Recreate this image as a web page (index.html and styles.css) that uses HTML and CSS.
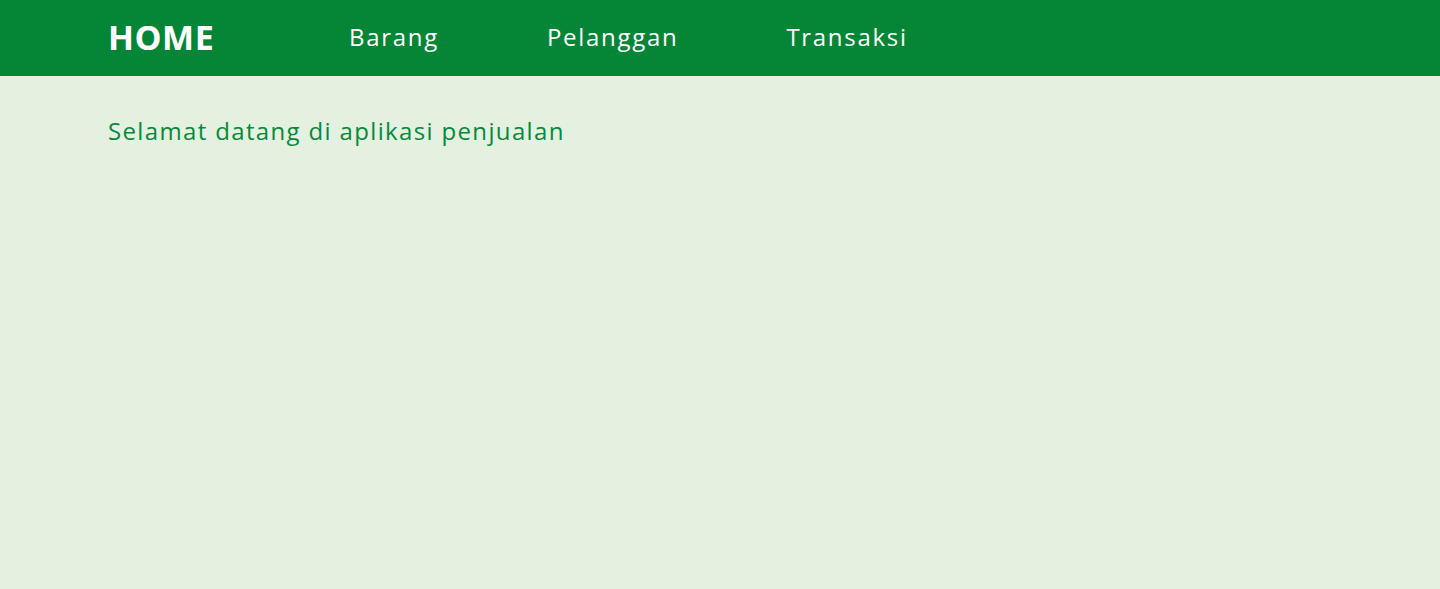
FILE: index.html
```html
<!DOCTYPE html>
<html lang="id">
<head>
<meta charset="utf-8">
<title>Home</title>
<link rel="stylesheet" href="styles.css">
</head>
<body>
<header class="topbar">
  <a class="brand" href="#">HOME</a>
  <nav class="nav">
    <a class="nav-link" href="#">Barang</a>
    <a class="nav-link" href="#">Pelanggan</a>
    <a class="nav-link" href="#">Transaksi</a>
  </nav>
</header>
<main class="content">
  <p class="welcome">Selamat datang di aplikasi penjualan</p>
</main>
</body>
</html>
```
FILE: styles.css
```css
* { box-sizing: border-box; }
html, body { margin: 0; padding: 0; height: 100%; }
body {
  background: #e4f0e0;
  font-family: "Open Sans", "Noto Sans", sans-serif;
}
.topbar {
  height: 76px;
  background: #058637;
  display: flex;
  align-items: center;
  padding-left: 108px;
}
.brand {
  color: #fff;
  text-decoration: none;
  font-weight: 700;
  font-size: 34px;
  letter-spacing: 0.5px;
  width: 241px;
  margin-top: -2px;
}
.nav { display: flex; gap: 108px; }
.nav-link {
  color: #fff;
  text-decoration: none;
  font-size: 24px;
  font-weight: 500;
  letter-spacing: 1.7px;
  margin-top: -3px;
}
.content { padding: 0 108px; }
.welcome {
  margin: 0;
  padding-top: 38px;
  color: #068a3a;
  font-size: 24px;
  font-weight: 500;
  letter-spacing: 1.35px;
}
```
